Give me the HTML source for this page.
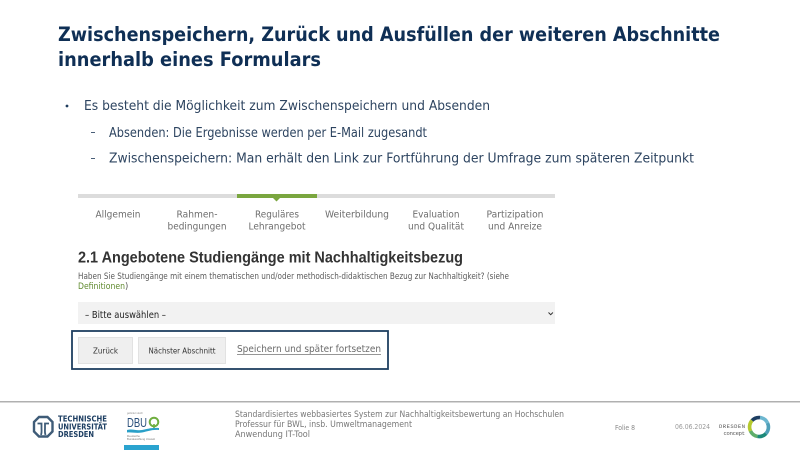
<!DOCTYPE html>
<html lang="de">
<head>
<meta charset="utf-8">
<title>Zwischenspeichern</title>
<style>
html,body{margin:0;padding:0;background:#fff;width:800px;height:450px;overflow:hidden}
svg{display:block}
text{font-family:"DejaVu Sans",sans-serif}
.l{font-family:"Liberation Sans",sans-serif}
.m{font-family:"Liberation Mono",monospace}
</style>
</head>
<body>
<svg width="800" height="450" viewBox="0 0 800 450" xmlns="http://www.w3.org/2000/svg">
<rect width="800" height="450" fill="#fff"/>

<!-- Title -->
<text x="58" y="41" font-size="19.500" font-weight="700" fill="#0f2f55" textLength="662" lengthAdjust="spacingAndGlyphs">Zwischenspeichern, Zurück und Ausfüllen der weiteren Abschnitte</text>
<text x="58" y="66" font-size="19.500" font-weight="700" fill="#0f2f55" textLength="263" lengthAdjust="spacingAndGlyphs">innerhalb eines Formulars</text>

<!-- Bullets -->
<circle cx="67" cy="106" r="1.400" fill="#1f3c5e"/>
<text x="84" y="110" font-size="13" fill="#2d4460" textLength="406" lengthAdjust="spacingAndGlyphs">Es besteht die Möglichkeit zum Zwischenspeichern und Absenden</text>
<rect x="91" y="132" width="4" height="1" fill="#4a5f78"/>
<text x="109" y="137" font-size="13" fill="#2d4460" textLength="318" lengthAdjust="spacingAndGlyphs">Absenden: Die Ergebnisse werden per E-Mail zugesandt</text>
<rect x="91" y="158" width="4" height="1" fill="#4a5f78"/>
<text x="109" y="162.500" font-size="13" fill="#2d4460" textLength="585" lengthAdjust="spacingAndGlyphs">Zwischenspeichern: Man erhält den Link zur Fortführung der Umfrage zum späteren Zeitpunkt</text>

<!-- Progress bar -->
<rect x="78" y="194" width="477" height="4" fill="#dcdcdc"/>
<rect x="237" y="194" width="80" height="4" fill="#7aa63f"/>
<path d="M273 198h7l-3.500 3.500z" fill="#7aa63f"/>

<!-- Tabs -->
<g font-size="10" fill="#6d6d6d" text-anchor="middle">
<text x="118" y="217.500" textLength="45" lengthAdjust="spacingAndGlyphs">Allgemein</text>
<text x="197" y="217.500" textLength="41" lengthAdjust="spacingAndGlyphs">Rahmen-</text>
<text x="197" y="229.500" textLength="59" lengthAdjust="spacingAndGlyphs">bedingungen</text>
<text x="277" y="217.500" textLength="44" lengthAdjust="spacingAndGlyphs">Reguläres</text>
<text x="277" y="229.500" textLength="57" lengthAdjust="spacingAndGlyphs">Lehrangebot</text>
<text x="357" y="217.500" textLength="64" lengthAdjust="spacingAndGlyphs">Weiterbildung</text>
<text x="436" y="217.500" textLength="47" lengthAdjust="spacingAndGlyphs">Evaluation</text>
<text x="436" y="229.500" textLength="56" lengthAdjust="spacingAndGlyphs">und Qualität</text>
<text x="515" y="217.500" textLength="57" lengthAdjust="spacingAndGlyphs">Partizipation</text>
<text x="515" y="229.500" textLength="54" lengthAdjust="spacingAndGlyphs">und Anreize</text>
</g>

<!-- Section heading -->
<text class="l" x="78" y="262.500" font-size="15.500" font-weight="700" fill="#333" textLength="385" lengthAdjust="spacingAndGlyphs">2.1 Angebotene Studiengänge mit Nachhaltigkeitsbezug</text>
<text x="78" y="279" font-size="8.500" fill="#5a5a5a" textLength="431" lengthAdjust="spacingAndGlyphs">Haben Sie Studiengänge mit einem thematischen und/oder methodisch-didaktischen Bezug zur Nachhaltigkeit? (siehe</text>
<text x="78" y="289" font-size="8.500" fill="#5f8a2e" textLength="47" lengthAdjust="spacingAndGlyphs">Definitionen</text>
<text x="125" y="289" font-size="8.500" fill="#5a5a5a">)</text>

<!-- Select -->
<rect x="78" y="302" width="477" height="22" fill="#f2f2f2"/>
<text x="85" y="318" font-size="10" fill="#222" textLength="81" lengthAdjust="spacingAndGlyphs">– Bitte auswählen –</text>
<path d="M548.500 312.500l2.200 2.200 2.200-2.200" fill="none" stroke="#333" stroke-width="1"/>

<!-- Highlight box -->
<rect x="72" y="331" width="316" height="38" fill="#fff" stroke="#1f3f60" stroke-width="1.800"/>
<rect x="78.500" y="337.500" width="54" height="26" fill="#efefef" stroke="#e2e2e2"/>
<text x="105.500" y="353.500" font-size="8" fill="#333" text-anchor="middle" textLength="25" lengthAdjust="spacingAndGlyphs">Zurück</text>
<rect x="138.500" y="337.500" width="87" height="26" fill="#efefef" stroke="#e2e2e2"/>
<text x="182" y="353.500" font-size="8" fill="#333" text-anchor="middle" textLength="67" lengthAdjust="spacingAndGlyphs">Nächster Abschnitt</text>
<text x="237" y="352" font-size="10" fill="#6a6a6a" textLength="144" lengthAdjust="spacingAndGlyphs">Speichern und später fortsetzen</text>
<rect x="237" y="354" width="144" height="0.900" fill="#8a8a8a"/>

<!-- Footer line -->
<rect x="0" y="401" width="800" height="1.500" fill="#b0b0b0"/>

<!-- TU logo -->
<g fill="none" stroke="#3f5c78">
<path d="M39 417h8.500l5 5v9.500l-5 5H39l-5-5V422z" stroke-width="2.400"/>
<path d="M37.500 423.500h4v4.500c0 3 .5 4-.5 7M49 423.500h-4v4.500c0 3-.5 4 .5 7" stroke-width="1.800"/>
</g>
<g font-size="7.800" font-weight="700" fill="#1d3e62">
<text x="58" y="421.700" textLength="49" lengthAdjust="spacingAndGlyphs">TECHNISCHE</text>
<text x="58" y="429.300" textLength="49" lengthAdjust="spacingAndGlyphs">UNIVERSITÄT</text>
<text x="58" y="437" textLength="36" lengthAdjust="spacingAndGlyphs">DRESDEN</text>
</g>

<!-- DBU logo -->
<text class="l" x="127" y="414" font-size="3" fill="#888" textLength="16" lengthAdjust="spacingAndGlyphs">gefördert durch</text>
<text class="l" x="127" y="427" font-size="12.500" fill="#2a4f7a" textLength="20" lengthAdjust="spacingAndGlyphs">DBU</text>
<circle cx="154" cy="422" r="4.300" fill="none" stroke="#6fae3f" stroke-width="2"/>
<rect x="153.200" y="424" width="1.600" height="5" fill="#6fae3f"/>
<path d="M127 430c6-1.500 9 1 15 0s9-2.500 17-2v2c-8-.5-11 1.500-17 2.500s-10-.5-15 0z" fill="#2aa0c8"/>
<text class="l" x="127" y="437" font-size="3" fill="#777" textLength="13" lengthAdjust="spacingAndGlyphs">Deutsche</text>
<text class="l" x="127" y="440" font-size="3" fill="#777" textLength="28" lengthAdjust="spacingAndGlyphs">Bundesstiftung Umwelt</text>
<rect x="124" y="445" width="35" height="5" fill="#2aa3cf"/>

<!-- Footer text -->
<g font-size="8.500" fill="#777">
<text x="235" y="417" textLength="329" lengthAdjust="spacingAndGlyphs">Standardisiertes webbasiertes System zur Nachhaltigkeitsbewertung an Hochschulen</text>
<text x="235" y="427" textLength="177" lengthAdjust="spacingAndGlyphs">Professur für BWL, insb. Umweltmanagement</text>
<text x="235" y="437" textLength="75" lengthAdjust="spacingAndGlyphs">Anwendung IT-Tool</text>
</g>
<text x="615" y="430" font-size="7" fill="#888" textLength="20" lengthAdjust="spacingAndGlyphs">Folie 8</text>
<text x="675" y="429" font-size="7" fill="#999" textLength="35" lengthAdjust="spacingAndGlyphs">06.06.2024</text>

<!-- Dresden concept -->
<text class="m" x="719" y="428" font-size="5.500" fill="#555" textLength="26" lengthAdjust="spacing">DRESDEN</text>
<text class="m" x="723.500" y="435" font-size="5.500" fill="#555" textLength="21.500" lengthAdjust="spacing">concept</text>
<g fill="none" stroke-width="3.600">
<path d="M750.500 431A9.500 9.500 0 0 1 752 420.500" stroke="#b5c92f"/>
<path d="M757.500 436.400A9.500 9.500 0 0 1 750.500 431" stroke="#5fae6a"/>
<path d="M766 433.500A9.500 9.500 0 0 1 757.500 436.400" stroke="#1d8a7a"/>
<path d="M767.500 423A9.500 9.500 0 0 1 766 433.500" stroke="#4f9fb8"/>
<path d="M760 417.600A9.500 9.500 0 0 1 767.500 423" stroke="#6db7d0"/>
<path d="M752 420.500A9.500 9.500 0 0 1 760 417.600" stroke="#1d3e62"/>
</g>
</svg>
</body>
</html>
